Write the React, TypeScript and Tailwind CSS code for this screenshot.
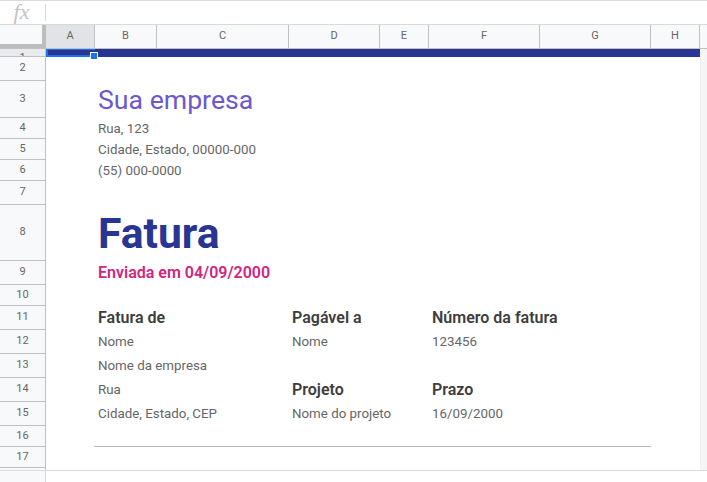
const rows: [string, string][] = [
  ["1", "h-[8px] items-start bg-[#e8eaed] pt-[3px] leading-[11px]"],
  ["2", "h-[24px] items-center"],
  ["3", "h-[37px] items-center"],
  ["4", "h-[21px] items-center"],
  ["5", "h-[21px] items-center"],
  ["6", "h-[21px] items-center"],
  ["7", "h-[24px] items-center"],
  ["8", "h-[56px] items-center"],
  ["9", "h-[24px] items-center"],
  ["10", "h-[21px] items-center"],
  ["11", "h-[24px] items-center"],
  ["12", "h-[24px] items-center"],
  ["13", "h-[24px] items-center"],
  ["14", "h-[24px] items-center"],
  ["15", "h-[24px] items-center"],
  ["16", "h-[21px] items-center"],
  ["17", "h-[21px] items-center"],
];

const cols: [string, string][] = [
  ["A", "w-[49px] bg-[#e1e3e6]"],
  ["B", "w-[62px]"],
  ["C", "w-[132px]"],
  ["D", "w-[91px]"],
  ["E", "w-[49px]"],
  ["F", "w-[111px]"],
  ["G", "w-[111px]"],
  ["H", "w-[49px]"],
];

function Label({ children }: { children: string }) {
  return <div className="text-[16px] font-semibold leading-[24px] text-[#3d3d3d]">{children}</div>;
}

function Value({ children }: { children: string }) {
  return <div className="text-[13.33px] leading-[24px] text-[#666666]">{children}</div>;
}

export default function App() {
  return (
    <div className="flex h-[482px] w-[707px] flex-col overflow-hidden bg-white font-['Roboto',sans-serif]">
      {/* Formula bar */}
      <div className="flex h-[25px] shrink-0 items-center border-t border-b border-[#dadada] bg-white">
        <div className="flex h-[17px] w-[46px] items-center justify-center border-r border-[#dadada] pb-[3px] pr-[2px] font-['Liberation_Serif',serif] text-[22px] leading-[17px] italic text-[#c4c4c4]">
          fx
        </div>
      </div>

      {/* Column headers */}
      <div className="flex h-[24px] shrink-0 border-b border-[#c0c0c0] bg-[#f8f9fa]">
        <div className="w-[46px] shrink-0 border-r-[4px] border-b-[4px] border-[#bdbdbd]" />
        {cols.map(([name, cls]) => (
          <div
            key={name}
            className={`flex shrink-0 items-center justify-center border-r border-[#c0c0c0] text-[11px] text-[#666666] ${cls}`}
          >
            {name}
          </div>
        ))}
      </div>

      <div className="flex min-h-0 flex-1">
        {/* Row headers */}
        <div className="w-[46px] shrink-0 overflow-hidden border-r border-[#c0c0c0] bg-[#f8f9fa]">
          {rows.map(([name, cls]) => (
            <div
              key={name}
              className={`flex justify-center overflow-hidden border-b border-[#c0c0c0] text-[11px] text-[#666666] ${cls}`}
            >
              {name}
            </div>
          ))}
        </div>

        {/* Sheet */}
        <div className="relative w-[654px] shrink-0 bg-white">
          <div className="h-[8px] bg-[#283593]" />
          {/* Selected cell A1 */}
          <div className="absolute left-0 top-0 h-[8px] w-[49px] border-t border-b-2 border-l-2 border-[#1a73e8] bg-[#283593]" />
          <div className="absolute left-[44px] top-[3px] h-[8px] w-[8px] border border-white bg-[#1a73e8]" />

          <div className="pl-[52px] pt-[24px]">
            <div className="flex h-[37px] items-center text-[26.67px] text-[#6a5acd]">Sua empresa</div>
            <div className="text-[13.33px] leading-[21px] text-[#666666]">Rua, 123</div>
            <div className="text-[13.33px] leading-[21px] text-[#666666]">Cidade, Estado, 00000-000</div>
            <div className="text-[13.33px] leading-[21px] text-[#666666]">(55) 000-0000</div>
            <div className="mt-[24px] flex h-[56px] items-center text-[42.67px] font-bold text-[#283593]">Fatura</div>
            <div className="flex h-[24px] items-center text-[16px] font-semibold text-[#d02580]">Enviada em 04/09/2000</div>

            <div className="mt-[21px] flex">
              <div className="w-[194px]">
                <Label>Fatura de</Label>
                <Value>Nome</Value>
                <Value>Nome da empresa</Value>
                <Value>Rua</Value>
                <Value>Cidade, Estado, CEP</Value>
              </div>
              <div className="w-[140px]">
                <Label>Pagável a</Label>
                <Value>Nome</Value>
                <div className="h-[24px]" />
                <Label>Projeto</Label>
                <Value>Nome do projeto</Value>
              </div>
              <div>
                <Label>Número da fatura</Label>
                <Value>123456</Value>
                <div className="h-[24px]" />
                <Label>Prazo</Label>
                <Value>16/09/2000</Value>
              </div>
            </div>
          </div>
          <div className="ml-[48px] mt-[20px] w-[557px] border-t border-[#b7b7b7]" />
        </div>

        {/* Scrollbar track */}
        <div className="flex-1 border-l border-[#f0f0f0] bg-[#f5f5f5]" />
      </div>

      {/* Bottom bar */}
      <div className="flex h-[12px] shrink-0 border-t border-[#dadada] bg-white">
        <div className="w-[46px] border-r border-[#dadada] bg-[#f8f9fa]" />
      </div>
    </div>
  );
}
